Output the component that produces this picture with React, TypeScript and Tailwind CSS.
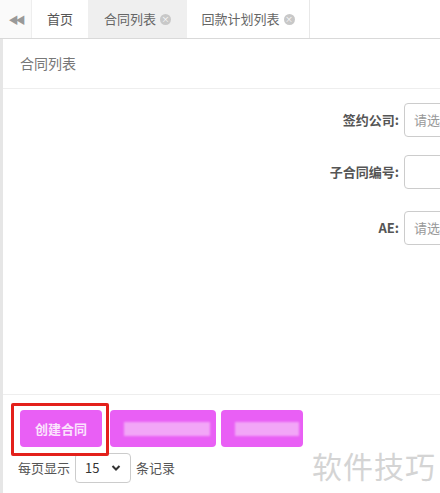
const font = "font-['Microsoft_YaHei','Noto_Sans_CJK_SC',sans-serif]";

const CloseDot = () => (
  <span className="ml-1 inline-flex h-[11px] w-[11px] items-center justify-center rounded-full bg-[#c8c8c8] text-[8px] leading-none text-white">
    ×
  </span>
);

const FormRow = ({ label, placeholder }: { label: string; placeholder?: string }) => (
  <div className="flex items-center">
    <span className="w-[401px] shrink-0 pr-[5px] text-right text-[13px] font-bold text-[#555]">{label}:</span>
    <div className="flex h-[34px] w-[80px] shrink-0 items-center rounded-l-[4px] border border-[#ccc] pl-[9px] text-[13px] whitespace-nowrap overflow-hidden text-[#999]">
      {placeholder}
    </div>
  </div>
);

const BlurButton = ({ w, bar }: { w: string; bar: string }) => (
  <div className={`flex h-[37px] ${w} items-center rounded-[4px] bg-[#e95ff5] pl-[14px]`}>
    <div className={`h-[14px] ${bar} bg-[#f2a6f7] blur-[1px]`} />
  </div>
);

export default function App() {
  return (
    <div className={`relative h-[493px] w-[440px] overflow-hidden bg-white ${font}`}>
      {/* 顶部标签栏 */}
      <div className="flex h-[39px] border-b border-[#d9d9d9] bg-white text-[13px] text-[#555]">
        <div className="flex w-[32px] items-center justify-center border-r border-[#eee] bg-[#fafafa] text-[#999]">
          <span className="text-[10px] tracking-[-3px]">◀◀</span>
        </div>
        <div className="flex w-[56px] items-center justify-center">首页</div>
        <div className="flex w-[99px] items-center justify-center bg-[#efefef] text-[#666]">
          合同列表
          <CloseDot />
        </div>
        <div className="flex w-[123px] items-center justify-center border-r border-[#e8e8e8] text-[#666]">
          回款计划列表
          <CloseDot />
        </div>
      </div>

      <div className="flex h-[454px]">
        <div className="w-[3px] bg-[#e6e6e6]" />
        <div className="flex flex-1 flex-col overflow-hidden">
          <div className="flex h-[50px] items-center border-b border-[#eee] pl-[17px] text-[14px] text-[#777]">
            合同列表
          </div>

          <div className="flex flex-col gap-[18px] pt-[14px]">
            <FormRow label="签约公司" placeholder="请选择" />
            <FormRow label="子合同编号" />
            <div className="mt-[4px]">
              <FormRow label="AE" placeholder="请选择" />
            </div>
          </div>

          <div className="mt-auto border-t border-[#eee] pb-[10px] pt-[15px]">
            <div className="flex items-center pl-[17px]">
              <div className="flex h-[37px] w-[82px] items-center justify-center rounded-[4px] bg-[#e95ff5] text-[13px] font-bold text-[#fbe3fd]">
                创建合同
              </div>
              <div className="w-[8px]" />
              <BlurButton w="w-[106px]" bar="w-[86px]" />
              <div className="w-[5px]" />
              <BlurButton w="w-[82px]" bar="w-[64px]" />
            </div>
            <div className="mt-[6px] flex items-center pl-[15px] text-[13px] text-[#555]">
              <span>每页显示</span>
              <div className="mx-[5px] flex h-[30px] w-[56px] items-center justify-between rounded-[4px] border border-[#ccc] px-[9px] text-[13px] text-[#333]">
                <span>15</span>
                <svg width="10" height="8" viewBox="0 0 10 8">
                  <path d="M1.5 2 L5 5.5 L8.5 2" fill="none" stroke="#333" strokeWidth="2" />
                </svg>
              </div>
              <span>条记录</span>
            </div>
          </div>
        </div>
      </div>

      {/* 红色标注框 */}
      <div className="absolute left-[11px] top-[403px] h-[53px] w-[98px] rounded-[2px] border-[3px] border-[#e3201b]" />

      <div className="absolute left-[312px] top-[443px] text-[30px] tracking-[1px] text-[#d4d4d4]">
        软件技巧
      </div>
    </div>
  );
}
